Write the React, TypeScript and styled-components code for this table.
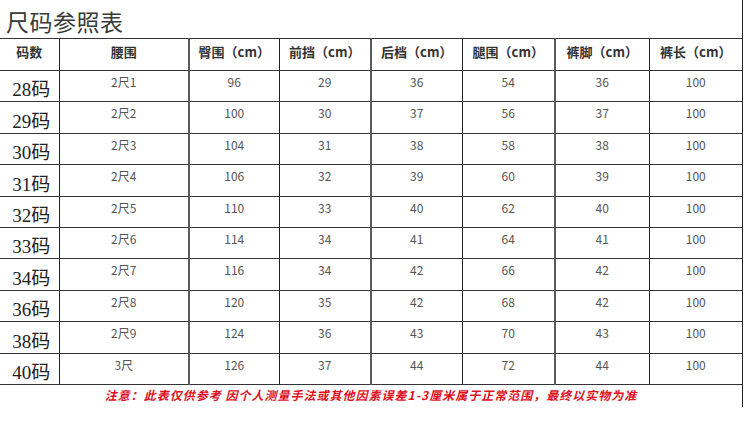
import React from 'react';
import styled, { createGlobalStyle } from 'styled-components';

const GlobalStyle = createGlobalStyle`
  html, body {
    margin: 0;
    padding: 0;
    background: #fff;
  }
  body {
    font-family: "Noto Sans CJK SC", "Liberation Sans", sans-serif;
  }
`;

const Frame = styled.div`
  width: 742px;
  height: 407px;
  border-right: 1px solid #222;
  display: flex;
  flex-direction: column;
`;

const Title = styled.h1`
  margin: 0;
  height: 38px;
  padding-left: 6px;
  font-size: 23px;
  line-height: 42px;
  font-weight: 400;
  color: #3a3a3a;
  letter-spacing: 0.5px;
`;

const SizeTable = styled.table`
  width: 742px;
  table-layout: fixed;
  border-collapse: collapse;
`;

const Row = styled.tr<{ $height: number }>`
  height: ${(p) => p.$height}px;
`;

type Line = 'none' | 'thin' | 'thick';

const lineStyle = (line: Line) =>
  line === 'thick' ? '2px solid #5a5a5a' : line === 'thin' ? '1px solid #222' : 'none';

const HeadCell = styled.th<{ $line: Line }>`
  padding: 3px 0 0;
  border-top: 1px solid #333;
  border-bottom: 1px solid #333;
  border-left: ${(p) => lineStyle(p.$line)};
  vertical-align: top;
  font-size: 13px;
  line-height: 20px;
  font-weight: 700;
  color: #333;
  text-align: center;
  white-space: nowrap;
`;

const SizeCell = styled.td`
  padding: 0 0 1px 4px;
  border-top: 1px solid #333;
  border-bottom: 1px solid #333;
  vertical-align: bottom;
  font-family: "Liberation Serif", "Noto Sans CJK SC", serif;
  font-size: 19px;
  line-height: 20px;
  color: #222;
  text-align: center;
`;

const DataCell = styled.td<{ $line: Line }>`
  padding: 4px 0 0;
  border-top: 1px solid #333;
  border-bottom: 1px solid #333;
  border-left: ${(p) => lineStyle(p.$line)};
  vertical-align: top;
  font-size: 12px;
  line-height: 14px;
  color: #555;
  text-align: center;
`;

const Note = styled.p`
  margin: 0;
  flex: 1;
  text-align: center;
  font-size: 12px;
  line-height: 20px;
  letter-spacing: 1px;
  font-weight: 700;
  font-style: italic;
  color: #e0101e;
`;

const columns = [59, 130, 90, 92, 91, 93, 94, 93];
const lines: Line[] = ['none', 'thin', 'thick', 'thin', 'thick', 'thin', 'thick', 'thin'];
const headers = ['码数', '腰围', '臀围（cm）', '前挡（cm）', '后档（cm）', '腿围（cm）', '裤脚（cm）', '裤长（cm）'];

const rows: [string, string, number, number, number, number, number, number][] = [
  ['28码', '2尺1', 96, 29, 36, 54, 36, 100],
  ['29码', '2尺2', 100, 30, 37, 56, 37, 100],
  ['30码', '2尺3', 104, 31, 38, 58, 38, 100],
  ['31码', '2尺4', 106, 32, 39, 60, 39, 100],
  ['32码', '2尺5', 110, 33, 40, 62, 40, 100],
  ['33码', '2尺6', 114, 34, 41, 64, 41, 100],
  ['34码', '2尺7', 116, 34, 42, 66, 42, 100],
  ['36码', '2尺8', 120, 35, 42, 68, 42, 100],
  ['38码', '2尺9', 124, 36, 43, 70, 43, 100],
  ['40码', '3尺', 126, 37, 44, 72, 44, 100],
];

export default function App() {
  return (
    <>
      <GlobalStyle />
      <Frame>
        <Title>尺码参照表</Title>
        <SizeTable>
          <colgroup>
            {columns.map((w, i) => (
              <col key={i} style={{ width: w }} />
            ))}
          </colgroup>
          <thead>
            <Row $height={32}>
              {headers.map((h, i) => (
                <HeadCell key={h} $line={lines[i]}>
                  {h}
                </HeadCell>
              ))}
            </Row>
          </thead>
          <tbody>
            {rows.map(([size, ...values]) => (
              <Row key={size} $height={31.4}>
                <SizeCell>{size}</SizeCell>
                {values.map((v, i) => (
                  <DataCell key={i} $line={lines[i + 1]}>
                    {v}
                  </DataCell>
                ))}
              </Row>
            ))}
          </tbody>
        </SizeTable>
        <Note>注意：此表仅供参考 因个人测量手法或其他因素误差1-3厘米属于正常范围，最终以实物为准</Note>
      </Frame>
    </>
  );
}
